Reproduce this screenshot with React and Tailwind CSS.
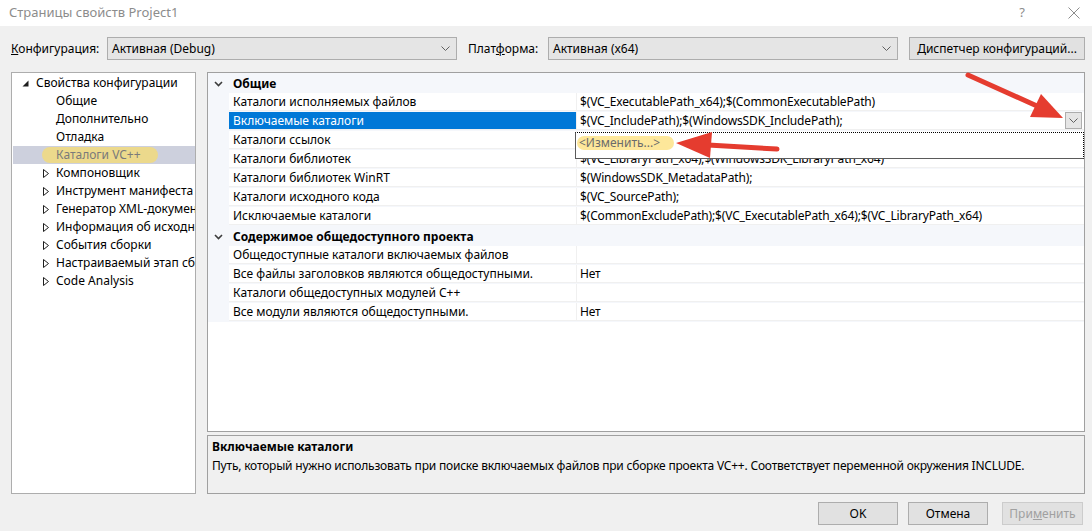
import React from 'react'

const font = { fontFamily: '"Noto Sans", "Segoe UI", sans-serif' }

function Chevron({ className = '' }) {
  return (
    <svg width="9" height="6" viewBox="0 0 9 6" className={className}>
      <polyline points="0.5,0.5 4.5,4.5 8.5,0.5" fill="none" stroke="#606060" strokeWidth="1" />
    </svg>
  )
}

function Select({ value, className }) {
  return (
    <div className={`h-[23px] bg-[#e5e5e5] border border-[#adadad] flex items-center justify-between pl-[4px] pr-[6px] ${className}`}>
      <span>{value}</span>
      <Chevron />
    </div>
  )
}

function Btn({ children, className = '', disabled }) {
  return (
    <div className={`h-[23px] bg-[#e1e1e1] border border-[#adadad] flex items-center justify-center ${disabled ? 'text-[#a0a0a0] border-[#cccccc] bg-[#cccccc]/40' : 'text-black'} ${className}`}>
      {children}
    </div>
  )
}

const treeItems = [
  { t: 'Общие' },
  { t: 'Дополнительно' },
  { t: 'Отладка' },
  { t: 'Каталоги VC++', sel: true },
  { t: 'Компоновщик', arrow: true },
  { t: 'Инструмент манифеста', arrow: true },
  { t: 'Генератор XML-документов', arrow: true },
  { t: 'Информация об исходном коде', arrow: true },
  { t: 'События сборки', arrow: true },
  { t: 'Настраиваемый этап сборки', arrow: true },
  { t: 'Code Analysis', arrow: true },
]

const general = [
  ['Каталоги исполняемых файлов', '$(VC_ExecutablePath_x64);$(CommonExecutablePath)'],
  ['Включаемые каталоги', '$(VC_IncludePath);$(WindowsSDK_IncludePath);', true],
  ['Каталоги ссылок', ''],
  ['Каталоги библиотек', '$(VC_LibraryPath_x64);$(WindowsSDK_LibraryPath_x64)'],
  ['Каталоги библиотек WinRT', '$(WindowsSDK_MetadataPath);'],
  ['Каталоги исходного кода', '$(VC_SourcePath);'],
  ['Исключаемые каталоги', '$(CommonExcludePath);$(VC_ExecutablePath_x64);$(VC_LibraryPath_x64)'],
]

const shared = [
  ['Общедоступные каталоги включаемых файлов', ''],
  ['Все файлы заголовков являются общедоступными.', 'Нет'],
  ['Каталоги общедоступных модулей C++', ''],
  ['Все модули являются общедоступными.', 'Нет'],
]

function Category({ title }) {
  return (
    <div className="h-[20px] flex items-center bg-[#f5f7fb] shrink-0 pt-[1px]">
      <div className="w-[21px] flex justify-center">
        <svg width="9" height="6" viewBox="0 0 9 6">
          <polyline points="1,1 4.5,4.5 8,1" fill="none" stroke="#3c3c3c" strokeWidth="1.6" />
        </svg>
      </div>
      <span className="pl-[4px] font-bold">{title}</span>
    </div>
  )
}

function Row({ name, value, sel }) {
  return (
    <div className="h-[19px] flex bg-[#f5f7fb] shrink-0">
      <div className="w-[21px]" />
      <div className={`w-[347px] h-[18px] flex items-center pl-[4px] border-b border-[#f0f0f0] ${sel ? 'bg-[#0078d7] text-white' : 'bg-white'}`}>
        {name}
      </div>
      <div className="flex-1 h-[18px] bg-white border-l border-b border-[#f0f0f0] flex items-center pl-[3px] pr-[2px] whitespace-nowrap overflow-hidden tracking-[-0.15px]">
        <span className="flex-1">{value}</span>
        {sel && (
          <div className="w-[17px] h-[17px] bg-[#e5e5e5] border border-[#adadad] flex items-center justify-center">
            <Chevron />
          </div>
        )}
      </div>
    </div>
  )
}

export default function App() {
  return (
    <div style={font} className="relative w-[1092px] h-[531px] bg-[#f0f0f0] text-[12px] text-black overflow-hidden flex flex-col">
      {/* title bar */}
      <div className="h-[26px] bg-white flex items-center pl-[9px] pr-[12px] shrink-0">
        <span className="text-[13px] text-[#8c8c8c]">Страницы свойств Project1</span>
        <span className="ml-auto text-[13px] text-[#8c8c8c] mr-[43px]">?</span>
        <svg width="12" height="12" viewBox="0 0 12 12" className="mr-[0px]">
          <path d="M0.5 0.5 L11.5 11.5 M11.5 0.5 L0.5 11.5" stroke="#8c8c8c" strokeWidth="1" />
        </svg>
      </div>

      {/* config row */}
      <div className="flex items-center mt-[11px] pl-[11px] shrink-0">
        <span className="w-[96px]"><span className="underline">К</span>онфигурация:</span>
        <Select value="Активная (Debug)" className="w-[350px]" />
        <span className="ml-[11px] w-[80px]">Плат<span className="underline">ф</span>орма:</span>
        <Select value="Активная (x64)" className="w-[350px]" />
        <Btn className="ml-[11px] w-[176px]"><span><span className="underline">Д</span>испетчер конфигураций...</span></Btn>
      </div>

      {/* main area */}
      <div className="flex mt-[12px] pl-[11px] pr-[7px] h-[422px] shrink-0">
        {/* tree */}
        <div className="w-[185px] shrink-0 bg-white border border-[#adadad] pt-[1px] pl-[1px] overflow-hidden">
          <div className="h-[18px] flex items-center whitespace-nowrap">
            <svg width="7" height="7" viewBox="0 0 7 7" className="ml-[9px] mr-[7px] shrink-0">
              <polygon points="6.5,0.5 6.5,6.5 0.5,6.5" fill="#1e1e1e" />
            </svg>
            <span>Свойства конфигурации</span>
          </div>
          {treeItems.map(it => (
            <div key={it.t} className={`h-[18px] flex items-center whitespace-nowrap relative overflow-hidden ${it.sel ? 'bg-[#cdd0dd]' : ''}`}>
              {it.sel && <div className="absolute left-[29px] top-[1px] w-[116px] h-[16px] rounded-full bg-[#ecd98c]" />}
              <div className="w-[43px] shrink-0 flex justify-end pr-[7px]">
                {it.arrow && (
                  <svg width="6" height="9" viewBox="0 0 6 9">
                    <polygon points="0.5,0.5 5.5,4.5 0.5,8.5" fill="none" stroke="#1e1e1e" strokeWidth="1" />
                  </svg>
                )}
              </div>
              <span className={`relative shrink-0 ${it.sel ? 'text-[#7a7a7a]' : ''}`}>{it.t}</span>
            </div>
          ))}
        </div>

        {/* right */}
        <div className="ml-[11px] flex-1 flex flex-col">
          <div className="relative h-[360px] bg-white border border-[#a0a0a0] flex flex-col">
            <Category title="Общие" />
            {general.map(r => <Row key={r[0]} name={r[0]} value={r[1]} sel={r[2]} />)}
            <Category title="Содержимое общедоступного проекта" />
            {shared.map(r => <Row key={r[0]} name={r[0]} value={r[1]} />)}

            {/* dropdown popup */}
            <div className="absolute left-[367px] top-[59px] w-[509px] h-[27px] bg-white border border-[#5a5a5a] [border-top-style:dotted] [border-right-style:dotted] border-t-black border-r-black">
              <div className="absolute left-[1px] top-[3px] w-[97px] h-[14px] rounded-full bg-[#fde79a]" />
              <span className="relative block pl-[3px] pt-[1px] text-[#6b6b6b]">&lt;Изменить...&gt;</span>
            </div>
          </div>

          <div className="mt-[3px] flex-1 border border-[#a0a0a0] bg-[#f0f0f0] px-[4px] pt-[2px]">
            <div className="font-bold">Включаемые каталоги</div>
            <div className="mt-[1px] tracking-[-0.2px]">Путь, который нужно использовать при поиске включаемых файлов при сборке проекта VC++.  Соответствует переменной окружения INCLUDE.</div>
          </div>
        </div>
      </div>

      {/* buttons */}
      <div className="flex justify-end mt-[8px] pr-[9px] shrink-0">
        <Btn className="w-[80px]">OK</Btn>
        <Btn className="w-[80px] ml-[10px]">Отмена</Btn>
        <Btn className="w-[81px] ml-[14px]" disabled><span>При<span className="underline">м</span>енить</span></Btn>
      </div>

      {/* red annotation arrows */}
      <svg className="absolute left-0 top-0 pointer-events-none" width="1092" height="531">
        <line x1="968" y1="75" x2="1037" y2="106" stroke="#e53c2f" strokeWidth="5" strokeLinecap="round" />
        <polygon points="1063,118 1030,117 1041,94" fill="#e53c2f" />
        <line x1="777" y1="149" x2="708" y2="145" stroke="#e53c2f" strokeWidth="5" strokeLinecap="round" />
        <polygon points="676,143 712,132 710,158" fill="#e53c2f" />
      </svg>
    </div>
  )
}
